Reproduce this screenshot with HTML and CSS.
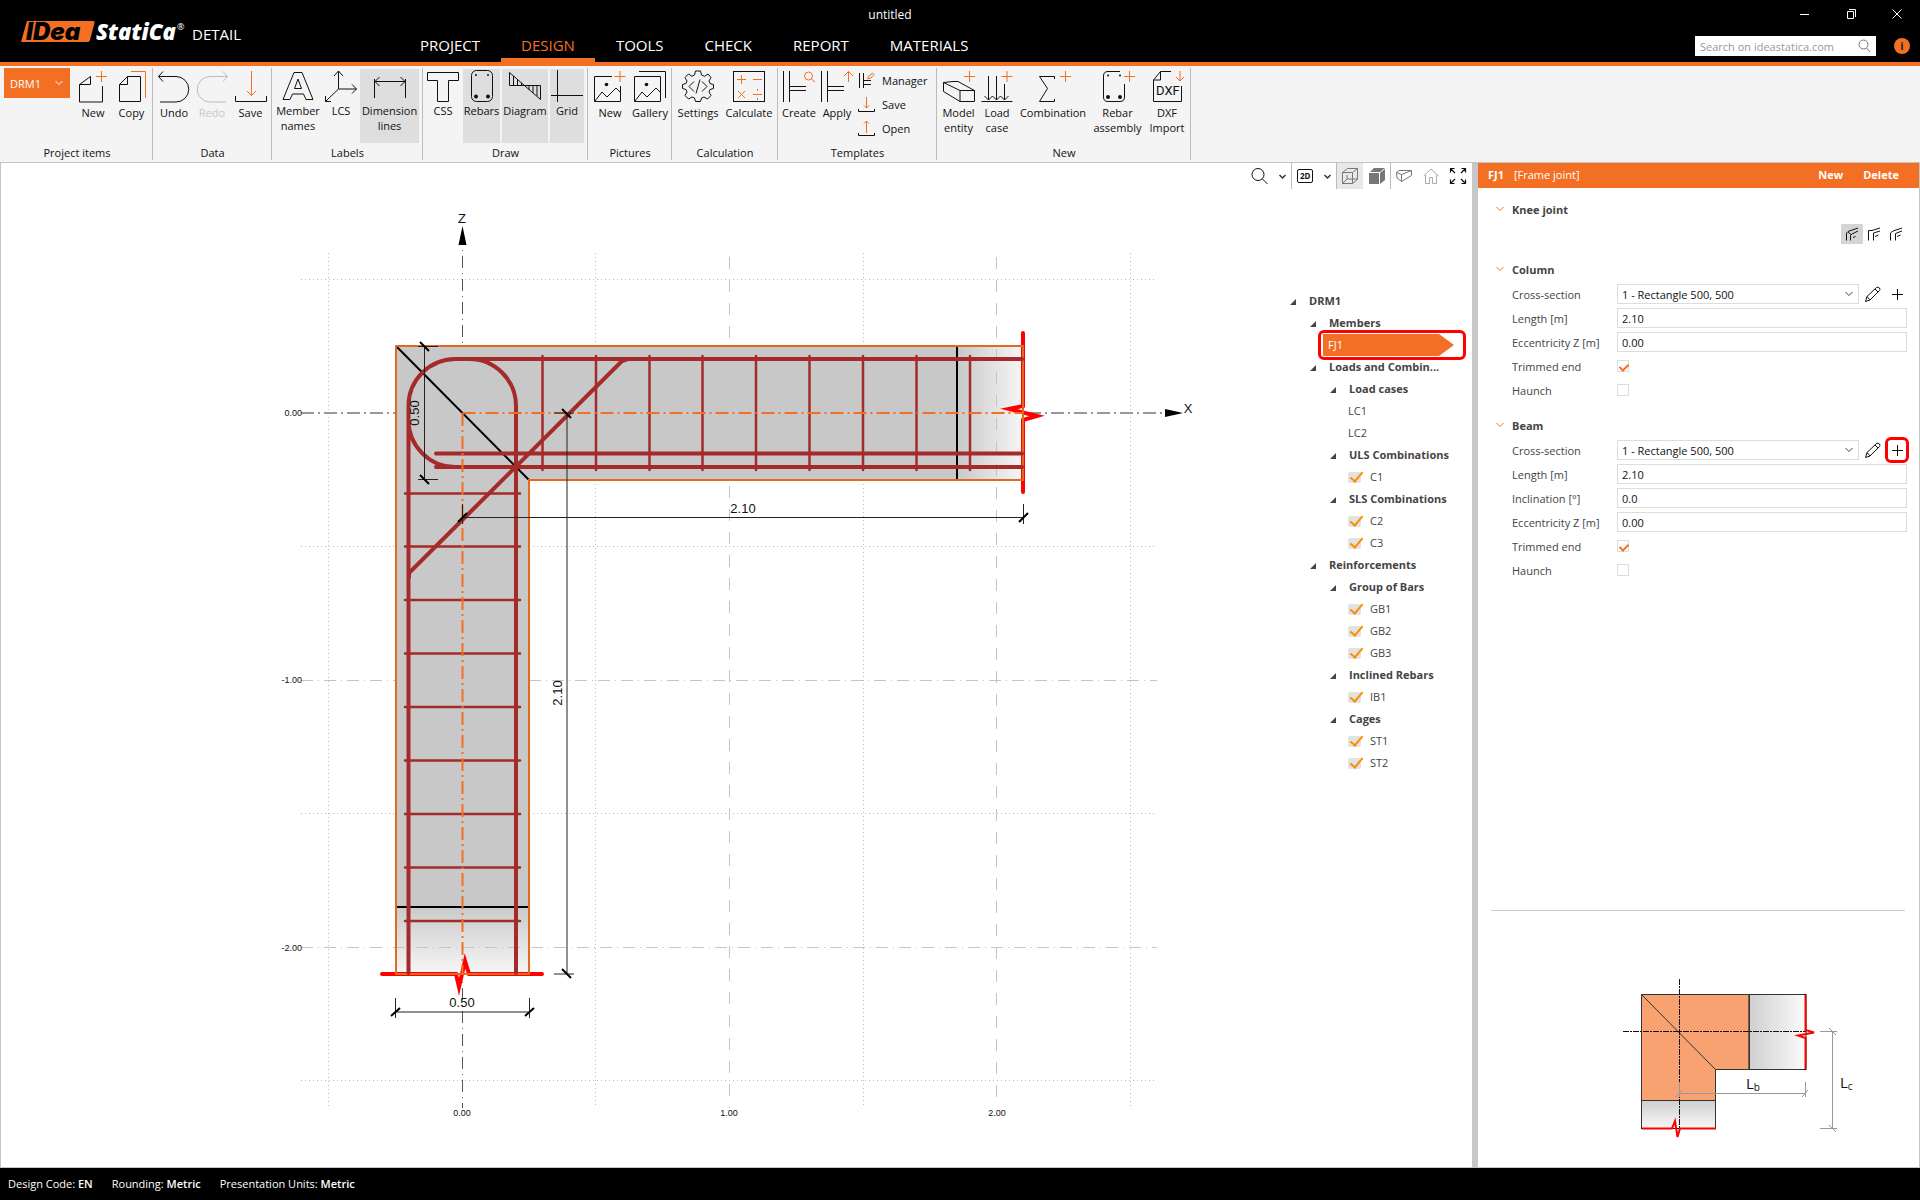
FILE: index.html
```html
<!DOCTYPE html>
<html lang="en">
<head>
    <meta charset="UTF-8">
    <meta name="viewport" content="width=device-width, initial-scale=1.0">
    <title>untitled - IDEA StatiCa Detail</title>
    <link rel="stylesheet" href="styles.css">
</head>
<body>
    <!-- Title bar and main tabs -->
    <header class="header">
        <div class="brand">
            <svg class="logo" width="166" height="26" viewBox="0 0 166 26">
                <path class="logo-box" d="M7 1H73.500Q75 1 74.500 3L70 20Q69.500 22 68 22H1Z"/>
                <text class="logo-idea" x="6" y="20">IDea</text>
                <text class="logo-statica" x="76" y="20">StatiCa</text>
                <text class="logo-reg" x="157" y="10">®</text>
            </svg>
            <span class="product">DETAIL</span>
        </div>
        <nav class="tabs">
            <a href="#">PROJECT</a>
            <a href="#" class="active">DESIGN</a>
            <a href="#">TOOLS</a>
            <a href="#">CHECK</a>
            <a href="#">REPORT</a>
            <a href="#">MATERIALS</a>
        </nav>
        <div class="doc-title">untitled</div>
        <div class="header-right">
            <div class="window-buttons">
                <button type="button" aria-label="Minimize"><svg width="12" height="12" viewBox="0 0 12 12"><path d="M1 6.500H10"/></svg></button>
                <button type="button" aria-label="Restore"><svg width="12" height="12" viewBox="0 0 12 12"><path d="M2.500 3.500H8.500V10.500H2.500ZM4 1.500H10.500V9"/></svg></button>
                <button type="button" aria-label="Close"><svg width="12" height="12" viewBox="0 0 12 12"><path d="M1.500 1.500L10.500 10.500M10.500 1.500L1.500 10.500"/></svg></button>
            </div>
            <div class="search-row">
                <div class="search">
                    <input type="text" placeholder="Search on ideastatica.com" aria-label="Search on ideastatica.com">
                    <svg width="14" height="14" viewBox="0 0 14 14"><circle cx="6.500" cy="5.500" r="4.500"/><path d="M9.500 9L13 13"/></svg>
                </div>
                <button type="button" class="info" aria-label="Information">i</button>
            </div>
        </div>
    </header>

    <!-- Ribbon -->
    <div class="ribbon">
        <section class="group g-project">
            <div class="tools">
                <button type="button" class="project-item">DRM1 <svg width="10" height="10" viewBox="0 0 10 10"><path d="M1.500 3L5 6.500L8.500 3"/></svg></button>
                <button type="button" class="tool"><svg class="icon" viewBox="0 0 32 32"><path d="M13 6.500H13.500V14.500H2.500V32H25.500V16M13.500 6.500L2.500 14.500"/><path class="o" d="M24.500 1V12M19 6.500H30"/></svg>New</button>
                <button type="button" class="tool"><svg class="icon" viewBox="0 0 32 32"><path d="M11.500 6.500H24.500V31.500H3.500V14.500L11.500 6.500V14.500H3.500"/><path class="o" d="M15 1.500H29.500V28"/></svg>Copy</button>
            </div>
            <h2>Project items</h2>
        </section>

        <section class="group g-data">
            <div class="tools">
                <button type="button" class="tool"><svg class="icon" viewBox="0 0 32 32"><path d="M5 1.500L0.500 6.500L5 11.500M0.500 6.500H18A12.500 12.500 0 0 1 18 32H2"/></svg>Undo</button>
                <button type="button" class="tool off" disabled><svg class="icon" viewBox="0 0 32 32"><path d="M27 1.500L31.500 6.500L27 11.500M31.500 6.500H14A12.500 12.500 0 0 0 14 32H30"/></svg>Redo</button>
                <button type="button" class="tool"><svg class="icon" viewBox="0 0 32 32"><path d="M0.500 26V31.500H31.500V26"/><path class="o" d="M16.500 1V25.500M12 21L16.500 25.500L21 21"/></svg>Save</button>
            </div>
            <h2>Data</h2>
        </section>

        <section class="group g-labels">
            <div class="tools">
                <button type="button" class="tool toggle"><svg class="icon" viewBox="0 0 32 32"><path d="M1 29.500L12 2.500H20L31 29.500H24L21.500 24H10.500L8 29.500ZM12.500 18.500H19.500L16 9Z"/></svg>Member names</button>
                <button type="button" class="tool toggle"><svg class="icon" viewBox="0 0 32 32"><path d="M13.500 19V1M9 6L13.500 1L18 6M13.500 19H31.500M27 14.500L31.500 19L27 23.500M13.500 19L0.500 31.500M0.500 26V31.500H6"/></svg>LCS</button>
                <button type="button" class="tool toggle on"><svg class="icon" viewBox="0 0 32 32"><path d="M0.500 9V28M31.500 9V28M1 11.500H31M5.500 7L1 11.500L5.500 16M26.500 7L31 11.500L26.500 16"/></svg>Dimension lines</button>
            </div>
            <h2>Labels</h2>
        </section>

        <section class="group g-draw">
            <div class="tools">
                <button type="button" class="tool toggle"><svg class="icon" viewBox="0 0 32 32"><path d="M0.500 2.500H31.500V10.500H21.500V31.500H10.500V10.500H0.500Z"/></svg>CSS</button>
                <button type="button" class="tool toggle on"><svg class="icon" viewBox="0 0 32 32"><rect x="5.500" y="0.500" width="21" height="31" rx="5"/><circle class="k" cx="10" cy="26.500" r="2"/><circle class="k" cx="22" cy="26.500" r="2"/><circle class="k" cx="10" cy="5" r="1"/><circle class="k" cx="22" cy="5" r="1"/></svg>Rebars</button>
                <button type="button" class="tool toggle on"><svg class="icon" viewBox="0 0 32 32"><path d="M0.500 2.500V15.500H31.500V29.500ZM4.500 6V15M8.500 9.500V15M12.500 13V15M20 16V20M24 16V23M28 16V26"/></svg>Diagram</button>
                <button type="button" class="tool toggle on"><svg class="icon" viewBox="0 0 32 32"><path d="M6.500 0V32M0 25.500H32"/></svg>Grid</button>
            </div>
            <h2>Draw</h2>
        </section>

        <section class="group g-pictures">
            <div class="tools">
                <button type="button" class="tool"><svg class="icon" viewBox="0 0 32 32"><path d="M18 6.500H0.500V31.500H26.500V16M1 31L8 22L13 27L22 18L26 22"/><circle class="k" cx="12.500" cy="14.500" r="1.800"/><path class="o" d="M26 1V12M20.500 6.500H31.500"/></svg>New</button>
                <button type="button" class="tool"><svg class="icon" viewBox="0 0 32 32"><path d="M0.500 6.500H26.500V31.500H0.500ZM1 31L8 22L13 27L22 18L26 22M5 1.500H31.500V28"/><circle class="k" cx="12.500" cy="14.500" r="1.800"/></svg>Gallery</button>
            </div>
            <h2>Pictures</h2>
        </section>

        <section class="group g-calc">
            <div class="tools">
                <button type="button" class="tool"><svg class="icon" viewBox="0 0 32 32"><path d="M13.500 1H18.500L19.500 5L22.500 6.300L26 4L29 7.500L27 11L28 13.500L31.500 14.500V18.500L28 19.500L27 22L29 25.500L25.500 29L22 27L19.500 28L18.500 31.500H13.500L12.500 28L10 27L6.500 29L3 25.500L5 22L4 19.500L0.500 18.500V14.500L4 13.500L5 11L3 7.500L6.500 4L10 6.300L12.500 5ZM12 11.500L7 16.500L12 21.500M20 11.500L25 16.500L20 21.500M18 9.500L14 23.500"/></svg>Settings</button>
                <button type="button" class="tool"><svg class="icon" viewBox="0 0 32 32"><rect x="0.500" y="1.500" width="31" height="30"/><path class="o" d="M8.500 5V14M4 9.500H13M20 9.500H29M5 21L12 28M12 21L5 28M20 24.500H29M24.500 19V21M24.500 28V30"/></svg>Calculate</button>
            </div>
            <h2>Calculation</h2>
        </section>

        <section class="group g-templates">
            <div class="tools">
                <button type="button" class="tool"><svg class="icon" viewBox="0 0 32 32"><path d="M0.500 1V32M6.500 1V32M7 16.500H23M7 20.500H23"/><circle class="o" cx="25.500" cy="6" r="4"/><path class="o" d="M28.500 9L32 12"/></svg>Create</button>
                <button type="button" class="tool"><svg class="icon" viewBox="0 0 32 32"><path d="M0.500 1V32M6.500 1V32M7 16.500H23M7 20.500H23"/><path class="o" d="M27.500 12V1.500M23 6L27.500 1.500L32 6"/></svg>Apply</button>
                <div class="small-tools">
                    <button type="button"><svg width="17" height="17" viewBox="0 0 17 17"><path d="M1.500 1V16M5.500 1V16M6 8.500H13M6 12.500H13"/><path class="o" d="M9.500 7L11 4L14.500 1L16 2.500L13 6Z"/></svg>Manager</button>
                    <button type="button"><svg width="17" height="17" viewBox="0 0 17 17"><path d="M0.500 13V15.500H16.500V13"/><path class="o" d="M8.500 1V12M6 9.500L8.500 12L11 9.500"/></svg>Save</button>
                    <button type="button"><svg width="17" height="17" viewBox="0 0 17 17"><path d="M0.500 13V15.500H16.500V13"/><path class="o" d="M8.500 13V1M6 3.500L8.500 1L11 3.500"/></svg>Open</button>
                </div>
            </div>
            <h2>Templates</h2>
        </section>

        <section class="group g-new">
            <div class="tools">
                <button type="button" class="tool"><svg class="icon" viewBox="0 0 32 32"><path d="M0.500 12.500L17 20.500H31.500V31.500H17L0.500 21.500V12.500L10 11.500H15L31.500 20.500M17 20.500V31.500"/><path class="o" d="M26.500 1V12M21 6.500H32"/></svg>Model entity</button>
                <button type="button" class="tool"><svg class="icon" viewBox="0 0 32 32"><path d="M0.500 31.500H31.500M7.500 6V30M15.500 6V30M23.500 14V30M3.500 26L7.500 30L11.500 26L15.500 30L19.500 26L23.500 30L27.500 26"/><path class="o" d="M26 1V12M20.500 6.500H31.500"/></svg>Load case</button>
                <button type="button" class="tool"><svg class="icon" viewBox="0 0 32 32"><path d="M17.500 9V6.500H2.500L10.500 18.500L2.500 31.500H17.500V29"/><path class="o" d="M28.500 1V12M23 6.500H34"/></svg>Combination</button>
                <button type="button" class="tool"><svg class="icon" viewBox="0 0 32 32"><path d="M18 1.500H6Q1.500 1.500 1.500 6V27Q1.500 31.500 6 31.500H18Q22.500 31.500 22.500 27V14"/><circle class="k" cx="6" cy="27" r="2"/><circle class="k" cx="18" cy="27" r="2"/><circle class="k" cx="6" cy="5.500" r="1"/><circle class="k" cx="18" cy="5.500" r="1"/><path class="o" d="M27.500 1V12M22 6.500H33"/></svg>Rebar assembly</button>
                <button type="button" class="tool"><svg class="icon" viewBox="0 0 32 32"><path d="M20 1.500H9.500L2.500 10V31.500H30.500V16M9.500 1.500V10H2.500"/><text x="5" y="25">DXF</text><path class="o" d="M29 1V11M25 7L29 11L33 7"/></svg>DXF Import</button>
            </div>
            <h2>New</h2>
        </section>
    </div>

    <main class="main">
        <!-- 2D scene -->
        <section class="viewport">
            <div class="view-tools">
                <button type="button" aria-label="Zoom"><svg width="18" height="18" viewBox="0 0 18 18"><circle cx="7" cy="7.500" r="6"/><path d="M11.500 12L16.500 17"/></svg></button>
                <button type="button" class="narrow" aria-label="Zoom options"><svg width="9" height="9" viewBox="0 0 9 9"><path class="thick" d="M1.500 3L4.500 6L7.500 3"/></svg></button>
                <button type="button" class="sep" aria-label="2D view"><svg width="18" height="18" viewBox="0 0 18 18"><rect x="1.500" y="2.500" width="15" height="13" rx="1.500"/><text x="4" y="12">2D</text></svg></button>
                <button type="button" class="narrow" aria-label="2D options"><svg width="9" height="9" viewBox="0 0 9 9"><path class="thick" d="M1.500 3L4.500 6L7.500 3"/></svg></button>
                <button type="button" class="sep on" aria-label="Wireframe"><svg class="gray" width="18" height="18" viewBox="0 0 18 18"><path d="M1.500 5.500H11.500V16.500H1.500ZM1.500 5.500L6.500 1.500H16.500V12.500L11.500 16.500M11.500 5.500L16.500 1.500M1.500 16.500L6 12H16.500M6 12V8"/></svg></button>
                <button type="button" aria-label="Solid"><svg class="solid" width="18" height="18" viewBox="0 0 18 18"><path d="M1 6H11V17H1ZM2 5L6 1H17L12 5ZM12 6L17 2V13L12 17Z"/></svg></button>
                <button type="button" class="sep" aria-label="Section view"><svg class="gray" width="18" height="18" viewBox="0 0 18 18"><path d="M1.500 5.500L4 3.500L16.500 3.500V8.500L6.500 14.500L2 11ZM1.500 5.500L6.500 7.500L16.500 3.500M6.500 7.500V14.500"/></svg></button>
                <button type="button" aria-label="Home"><svg class="light" width="18" height="18" viewBox="0 0 18 18"><path d="M1.500 9L9 2L16.500 9M3.500 8V16.500H7.500V10.500H10.500V16.500H14.500V8"/></svg></button>
                <button type="button" aria-label="Full screen"><svg class="bold" width="18" height="18" viewBox="0 0 18 18"><path d="M1.500 5.500V1.500H5.500M1.500 1.500L6 6M12.500 1.500H16.500V5.500M16.500 1.500L12 6M1.500 12.500V16.500H5.500M1.500 16.500L6 12M12.500 16.500H16.500V12.500M16.500 16.500L12 12"/></svg></button>
            </div>

            <div class="scene">
                <svg class="drawing" viewBox="1 189 1281 960" preserveAspectRatio="xMinYMin meet">
                    <defs>
                        <linearGradient id="fadeRight"><stop offset="0" stop-color="#c8c8c8"/><stop offset="1" stop-color="#f6f6f6"/></linearGradient>
                        <linearGradient id="fadeDown" x1="0" y1="0" x2="0" y2="1"><stop offset="0" stop-color="#cacaca"/><stop offset="1" stop-color="#f6f6f6"/></linearGradient>
                    </defs>

                    <!-- concrete -->
                    <path class="concrete" d="M396 346H957V480H529V907H396Z"/>
                    <rect x="957" y="346" width="66" height="134" fill="url(#fadeRight)"/>
                    <rect x="396" y="907" width="133" height="67" fill="url(#fadeDown)"/>

                    <!-- grid -->
                    <path class="minor" d="M328.500 253V1108M595.500 253V346M595.500 480V1108M863.500 253V346M863.500 480V1108M1130.500 253V1108M301 279.500H1157M301 546.500H396M529 546.500H1157M301 813.500H396M529 813.500H1157M301 1080.500H1157"/>
                    <path class="major" d="M729.500 257V346M729.500 486V1108M996.500 257V1108"/>
                    <path class="major dashdot" d="M301 680.500H396M529 680.500H1157M301 947.500H1157"/>

                    <!-- axes -->
                    <path class="axis-x" d="M301 413H396M1028 413H1166"/>
                    <path class="axis-z" d="M462.500 250V346M462.500 982V1108"/>
                    <path class="fill" d="M462.500 226L466.500 245H458.500ZM1183 413L1165 417V409Z"/>
                    <text class="dim" x="462" y="223">Z</text>
                    <text class="dim" x="1188" y="413">X</text>

                    <!-- member outline -->
                    <path class="cut" d="M957 346V480M396 907H529M396 346L529 480"/>
                    <path class="break" d="M1023 333V406L1009 409L1037 416L1023 420V492M382 974H456L459 987L465 961L469 974H542"/>
                    <path class="outline" d="M396 346H1023V480H529V974H396Z"/>

                    <!-- stirrups -->
                    <path class="stirrup" d="M542.500 356V470M596 356V470M649.500 356V470M702.500 356V470M756 356V470M809.500 356V470M863 356V470M916.500 356V470M970 356V470"/>
                    <path class="stirrup" d="M405 493.500H520M405 546.500H520M405 600H520M405 653.500H520M405 707H520M405 760.500H520M405 814H520M405 867.500H520M405 921H520"/>

                    <!-- main bars -->
                    <path class="bar" d="M408.500 973V406A47 47 0 0 1 455 359H1022M516 973V406A47 47 0 0 0 469 359M408.500 420A47 47 0 0 0 455 467H1022"/>
                    <path class="bar" d="M436 467H455M436 453.500H1022M409 577V573L622 361L628 359"/>

                    <path class="centre" d="M462.500 413H1023M462.500 413V974"/>

                    <!-- dimensions -->
                    <path class="dim-line" d="M424.500 346V480M418 346.500H438M418 479.500H438M567 413V974M554 413H574M554 974H574M462 517.500H1023M462.500 504V524M1023.500 504V524M396 1012H529M395.500 998V1018M529.500 998V1018"/>
                    <path class="tick" d="M420 342L429 351M420 475L429 484M562 409L571 418M562 969L571 978M458 522L467 513M1019 522L1028 513M391 1016L400 1008M525 1016L534 1008"/>
                    <text class="dim" transform="translate(419 413) rotate(-90)">0.50</text>
                    <text class="dim" transform="translate(562 693) rotate(-90)">2.10</text>
                    <text class="dim" x="743" y="513">2.10</text>
                    <text class="dim" x="462" y="1007">0.50</text>
                    <text class="scale-y" x="302" y="416">0.00</text>
                    <text class="scale-y" x="302" y="683">-1.00</text>
                    <text class="scale-y" x="302" y="951">-2.00</text>
                    <text class="scale-x" x="462" y="1116">0.00</text>
                    <text class="scale-x" x="729" y="1116">1.00</text>
                    <text class="scale-x" x="997" y="1116">2.00</text>
                </svg>

                <ul class="tree">
                    <li class="node l1">DRM1</li>
                    <li class="node l2">Members</li>
                    <li class="selected"><a href="#">FJ1</a></li>
                    <li class="node l2">Loads and Combin...</li>
                    <li class="node l3">Load cases</li>
                    <li class="leaf">LC1</li>
                    <li class="leaf">LC2</li>
                    <li class="node l3">ULS Combinations</li>
                    <li class="leaf"><label><input type="checkbox" checked>C1</label></li>
                    <li class="node l3">SLS Combinations</li>
                    <li class="leaf"><label><input type="checkbox" checked>C2</label></li>
                    <li class="leaf"><label><input type="checkbox" checked>C3</label></li>
                    <li class="node l2">Reinforcements</li>
                    <li class="node l3">Group of Bars</li>
                    <li class="leaf"><label><input type="checkbox" checked>GB1</label></li>
                    <li class="leaf"><label><input type="checkbox" checked>GB2</label></li>
                    <li class="leaf"><label><input type="checkbox" checked>GB3</label></li>
                    <li class="node l3">Inclined Rebars</li>
                    <li class="leaf"><label><input type="checkbox" checked>IB1</label></li>
                    <li class="node l3">Cages</li>
                    <li class="leaf"><label><input type="checkbox" checked>ST1</label></li>
                    <li class="leaf"><label><input type="checkbox" checked>ST2</label></li>
                </ul>
            </div>
        </section>

        <!-- Properties -->
        <aside class="panel">
            <div class="panel-head">
                <b>FJ1</b>
                <span>[Frame joint]</span>
                <button type="button">New</button>
                <button type="button">Delete</button>
            </div>
            <div class="panel-body">
                <h3><svg width="10" height="10" viewBox="0 0 10 10"><path d="M1.500 3L5 6.500L8.500 3"/></svg>Knee joint</h3>
                <div class="joint-types">
                    <button type="button" class="on" aria-label="Type 1"><svg width="14" height="14" viewBox="0 0 14 14"><path d="M1.500 13.500V6L3 4.500L13 1M5.500 13.500V8.500L7 7L13 4M3 5L6 7.500M8 10.500L10.500 9.500"/></svg></button>
                    <button type="button" aria-label="Type 2"><svg width="14" height="14" viewBox="0 0 14 14"><path d="M1.500 13.500V3.500H5L13 1M6.500 13.500V6L13 4M8 9.500L11.500 8"/></svg></button>
                    <button type="button" aria-label="Type 3"><svg width="14" height="14" viewBox="0 0 14 14"><path d="M1.500 13.500V6L4 4L13 1M6.500 13.500V6.500L13 4M8 9.500L11.500 8"/></svg></button>
                </div>

                <h3><svg width="10" height="10" viewBox="0 0 10 10"><path d="M1.500 3L5 6.500L8.500 3"/></svg>Column</h3>
                <div class="fields">
                    <label for="col-css">Cross-section</label>
                    <div class="select-row">
                        <div class="select"><select id="col-css"><option>1 - Rectangle 500, 500</option></select><svg width="10" height="10" viewBox="0 0 10 10"><path d="M1.500 3L5 6.500L8.500 3"/></svg></div>
                        <button type="button" aria-label="Edit cross-section"><svg width="16" height="16" viewBox="0 0 16 16"><path d="M0.500 15.500L2 10.500L11.500 1.500Q13 0.500 14.500 2Q15.500 3.500 14.500 4.500L5 14ZM2 10.500L5 14M10 3L13 6"/></svg></button>
                        <button type="button" aria-label="Add cross-section"><svg width="12" height="12" viewBox="0 0 12 12"><path d="M6.500 1V12M1 6.500H12"/></svg></button>
                    </div>
                    <label for="col-len">Length [m]</label>
                    <input type="text" id="col-len" value="2.10">
                    <label for="col-ecc">Eccentricity Z [m]</label>
                    <input type="text" id="col-ecc" value="0.00">
                    <label for="col-trim">Trimmed end</label>
                    <input type="checkbox" id="col-trim" checked>
                    <label for="col-haunch">Haunch</label>
                    <input type="checkbox" id="col-haunch">
                </div>

                <h3><svg width="10" height="10" viewBox="0 0 10 10"><path d="M1.500 3L5 6.500L8.500 3"/></svg>Beam</h3>
                <div class="fields">
                    <label for="beam-css">Cross-section</label>
                    <div class="select-row">
                        <div class="select"><select id="beam-css"><option>1 - Rectangle 500, 500</option></select><svg width="10" height="10" viewBox="0 0 10 10"><path d="M1.500 3L5 6.500L8.500 3"/></svg></div>
                        <button type="button" aria-label="Edit cross-section"><svg width="16" height="16" viewBox="0 0 16 16"><path d="M0.500 15.500L2 10.500L11.500 1.500Q13 0.500 14.500 2Q15.500 3.500 14.500 4.500L5 14ZM2 10.500L5 14M10 3L13 6"/></svg></button>
                        <button type="button" class="marked" aria-label="Add cross-section"><svg width="12" height="12" viewBox="0 0 12 12"><path d="M6.500 1V12M1 6.500H12"/></svg></button>
                    </div>
                    <label for="beam-len">Length [m]</label>
                    <input type="text" id="beam-len" value="2.10">
                    <label for="beam-inc">Inclination [°]</label>
                    <input type="text" id="beam-inc" value="0.0">
                    <label for="beam-ecc">Eccentricity Z [m]</label>
                    <input type="text" id="beam-ecc" value="0.00">
                    <label for="beam-trim">Trimmed end</label>
                    <input type="checkbox" id="beam-trim" checked>
                    <label for="beam-haunch">Haunch</label>
                    <input type="checkbox" id="beam-haunch">
                </div>
            </div>

            <div class="preview">
                <svg width="285" height="170" viewBox="1620 975 285 170">
                    <defs>
                        <linearGradient id="pvRight"><stop offset="0" stop-color="#cfcfcf"/><stop offset="1" stop-color="#fbfbfb"/></linearGradient>
                        <linearGradient id="pvDown" x1="0" y1="0" x2="0" y2="1"><stop offset="0" stop-color="#cfcfcf"/><stop offset="1" stop-color="#f8f8f8"/></linearGradient>
                    </defs>
                    <path class="pv-body" d="M1641.500 994.500H1749V1069.500H1715.500V1100.500H1641.500Z"/>
                    <rect x="1749" y="994.500" width="57" height="75" fill="url(#pvRight)"/>
                    <rect x="1641.500" y="1100.500" width="74" height="28" fill="url(#pvDown)"/>
                    <path class="pv-line" d="M1641.500 994.500H1805M1749.500 994.500V1069.500M1805 1069.500H1715.500V1128M1641.500 994.500V1128M1641.500 1100.500H1716M1641.500 994.500L1715.500 1069.500"/>
                    <path class="pv-axis" d="M1623 1031.500H1806M1679.500 979V1132"/>
                    <path class="pv-dim" d="M1679.500 1082V1097M1679.500 1093.500H1805.500M1805.500 1082V1097M1676 1097L1682 1090M1802 1097L1808 1090M1820 1031.500H1837M1832.500 1031.500V1128.500M1820 1128.500H1837M1829 1028L1836 1035M1829 1125L1836 1132"/>
                    <path class="pv-break" d="M1805.500 995V1030L1814 1032.500L1798 1035.500L1805.500 1038V1069M1642 1128.500H1672L1675 1121L1677.500 1137L1680 1128.500H1716"/>
                    <text class="pv-text" x="1746" y="1089">L<tspan class="pv-sub" dy="2">b</tspan></text>
                    <text class="pv-text" x="1840" y="1088">L<tspan class="pv-sub" dy="2">c</tspan></text>
                </svg>
            </div>
        </aside>
    </main>

    <footer class="status">
        <span>Design Code: <b>EN</b></span>
        <span>Rounding: <b>Metric</b></span>
        <span>Presentation Units: <b>Metric</b></span>
    </footer>
</body>
</html>
```

FILE: styles.css
```css
* {
    box-sizing: border-box;
}

body {
    margin: 0;
    min-height: 100vh;
    display: flex;
    flex-direction: column;
    font-family: "Open Sans", "Noto Sans", sans-serif;
    font-size: 11px;
    line-height: 15px;
    color: #444;
    background: #fff;
}

button, input, select {
    font: inherit;
    color: inherit;
}

button {
    padding: 0;
    border: none;
    background: none;
    cursor: pointer;
}

svg {
    display: block;
    fill: none;
    stroke: #111;
    overflow: visible;
}

svg text {
    stroke: none;
    fill: #111;
}

h2, h3 {
    margin: 0;
    font-size: 11px;
}

/* Header */
.header {
    position: relative;
    display: flex;
    height: 66px;
    border-bottom: 4px solid #f36f24;
    background: #000;
    color: #fff;
}

.brand {
    display: flex;
    align-items: flex-start;
    width: 400px;
    padding: 20px 0 0 20px;
}

.logo-box {
    fill: #f36f24;
    stroke: none;
}

.logo .logo-idea {
    font: italic 900 24px Inter, sans-serif;
    fill: #000;
}

.logo .logo-statica {
    font: italic 800 22px "Open Sans", sans-serif;
    fill: #fff;
}

.logo .logo-reg {
    font-size: 9px;
    fill: #fff;
}

.product {
    padding: 4px 0 0 6px;
    font-size: 15px;
    line-height: 20px;
}

.tabs {
    display: flex;
    align-items: flex-end;
    gap: 1px;
}

.tabs a {
    padding: 0 20px 3px;
    border-bottom: 4px solid transparent;
    font-size: 15px;
    line-height: 20px;
    color: #fff;
    text-decoration: none;
}

.tabs .active {
    color: #f36f24;
    border-color: #f36f24;
}

.doc-title {
    position: absolute;
    top: 7px;
    left: 0;
    right: 140px;
    font-size: 12px;
    text-align: center;
    pointer-events: none;
}

.header-right {
    display: flex;
    flex-direction: column;
    align-items: flex-end;
    margin-left: auto;
    padding: 8px 10px 0 0;
}

.window-buttons {
    display: flex;
    gap: 34px;
    padding-right: 7px;
}

.window-buttons svg {
    stroke: #fff;
}

.search-row {
    display: flex;
    align-items: center;
    gap: 18px;
    margin-top: 16px;
}

.search {
    display: flex;
    align-items: center;
    width: 181px;
    height: 20px;
    padding: 0 5px;
    background: #fff;
}

.search input {
    flex: 1;
    min-width: 0;
    padding: 0;
    border: none;
    outline: none;
}

.search input::placeholder {
    color: #999;
}

.search svg {
    stroke: #777;
}

.info {
    width: 16px;
    height: 16px;
    border-radius: 50%;
    background: #f36f24;
    color: #222;
    font-weight: bold;
    line-height: 16px;
}

/* Ribbon */
.ribbon {
    display: flex;
    height: 97px;
    padding: 2px 0 2px 1px;
    border-bottom: 1px solid #c4c4c4;
    background: #f4f4f4;
    color: #111;
}

.group {
    display: flex;
    flex-direction: column;
    justify-content: space-between;
    padding: 0 1px 0 2px;
    border-right: 1px solid #bbb;
}

.group h2 {
    font-weight: normal;
    text-align: center;
}

.tools {
    display: grid;
    justify-content: start;
}

.g-project .tools { grid-template-columns: 70px 38px 39px; padding-left: 1px; }
.g-data .tools { grid-template-columns: 38px 38px 39px; }
.g-labels .tools { grid-template-columns: 50px 36px 61px; }
.g-draw .tools { grid-template-columns: 38px 39px 48px 36px; }
.g-pictures .tools { grid-template-columns: 40px 40px; }
.g-calc .tools { grid-template-columns: 48px 54px; }
.g-templates .tools { grid-template-columns: 38px 38px 79px; }
.g-new .tools { grid-template-columns: 39px 38px 74px 55px 44px; }

.project-item {
    display: flex;
    align-items: center;
    justify-content: space-between;
    width: 66px;
    height: 30px;
    padding: 0 6px;
    background: #f36f24;
    color: #fff;
}

.project-item svg {
    stroke: #fff;
}

.tool {
    display: flex;
    flex-direction: column;
    align-items: center;
    height: 74px;
    padding-top: 2px;
}

.tool .icon {
    flex: none;
    width: 32px;
    height: 32px;
    margin-bottom: 3px;
}

.tool.toggle {
    margin: 1px 2px 0 0;
    padding-top: 1px;
}

.tool.toggle .icon {
    margin-bottom: 1px;
}

.tool.on {
    background: #dedede;
}

.tool.off {
    color: #c8c8c8;
}

.tool.off svg {
    stroke: #bbb;
}

.ribbon .o {
    stroke: #f36f24;
}

.ribbon .k {
    fill: #111;
    stroke: none;
}

.tool text {
    font: 13px Roboto, sans-serif;
}

.small-tools {
    display: flex;
    flex-direction: column;
    padding-left: 2px;
}

.small-tools button {
    display: flex;
    align-items: center;
    gap: 7px;
    height: 24px;
}

/* Scene */
.main {
    flex: 1;
    display: flex;
}

.viewport {
    flex: 1;
    display: flex;
    flex-direction: column;
    min-width: 0;
    border-left: 1px solid #c4c4c4;
}

.view-tools {
    display: flex;
    justify-content: flex-end;
    height: 26px;
    padding-right: 1px;
}

.view-tools button {
    display: flex;
    align-items: center;
    justify-content: center;
    width: 27px;
}

.view-tools .narrow {
    width: 18px;
}

.view-tools .sep {
    border-left: 1px solid #bbb;
}

.view-tools .on {
    background: #e8e8e8;
}

.view-tools text {
    font: bold 8px "Open Sans", sans-serif;
}

.view-tools .thick {
    stroke: #333;
    stroke-width: 1.5;
}

.view-tools .gray {
    stroke: #777;
}

.view-tools .light {
    stroke: #aaa;
}

.view-tools .solid {
    fill: #777;
    stroke: none;
}

.view-tools .bold {
    stroke-width: 1.2;
}

.scene {
    flex: 1;
    display: flex;
}

.drawing {
    flex: 1;
    min-width: 0;
    align-self: flex-start;
}

.concrete {
    fill: #c8c8c8;
    stroke: none;
}

.minor {
    stroke: #bbb;
    stroke-dasharray: 1 3;
}

.major {
    stroke: #c4c4c4;
    stroke-dasharray: 12 11;
}

.dashdot {
    stroke-dasharray: 12 5 1 5;
}

.axis-x {
    stroke: #999;
    stroke-width: 2;
    stroke-dasharray: 13 4 2 4;
}

.axis-z {
    stroke: #555;
    stroke-dasharray: 1 5 12 5;
}

.drawing .fill {
    fill: #000;
    stroke: none;
}

.cut {
    stroke: #000;
    stroke-width: 2;
}

.break {
    stroke: #f00;
    stroke-width: 4;
    stroke-linecap: round;
    stroke-miterlimit: 10;
}

.outline {
    stroke: #e06a24;
    stroke-width: 2;
}

.stirrup {
    stroke: #a52a2a;
    stroke-width: 2.5;
    stroke-linecap: round;
}

.bar {
    stroke: #a52a2a;
    stroke-width: 4;
    stroke-linecap: round;
    stroke-linejoin: round;
}

.centre {
    stroke: #f36f24;
    stroke-width: 2;
    stroke-dasharray: 13 4 2 4;
}

.dim-line {
    stroke: #222;
}

.tick {
    stroke: #000;
    stroke-width: 2;
}

.dim {
    font: 13px "Liberation Sans", Arial, sans-serif;
    text-anchor: middle;
}

.scale-x, .scale-y {
    font: 9px "Liberation Sans", Arial, sans-serif;
    text-anchor: middle;
}

.scale-y {
    text-anchor: end;
}

/* Tree */
.tree {
    flex: none;
    width: 190px;
    margin: 0;
    padding: 101px 0 0;
    list-style: none;
}

.tree li {
    position: relative;
    height: 22px;
    line-height: 22px;
}

.node {
    font-weight: bold;
}

.node::before {
    content: "";
    display: inline-block;
    margin-right: 13px;
    border-left: 6px solid transparent;
    border-bottom: 6px solid #444;
}

.l1 { padding-left: 8px; }
.l2 { padding-left: 28px; }
.l3 { padding-left: 48px; }
.leaf { padding-left: 66px; }

.leaf label {
    display: flex;
    align-items: center;
    gap: 9px;
}

.leaf input {
    appearance: none;
    width: 13px;
    height: 11px;
    margin: 0;
    border-radius: 2px;
    background: #e2e2e2;
    position: relative;
}

.leaf input:checked::after {
    content: "";
    position: absolute;
    left: 5px;
    top: -3px;
    width: 5px;
    height: 11px;
    border: solid #ff8c00;
    border-width: 0 2px 2px 0;
    transform: rotate(40deg);
}

.selected a {
    display: block;
    width: 131px;
    margin-left: 41px;
    padding-left: 5px;
    background: #f36f24;
    clip-path: polygon(0 0, 116px 0, 100% 50%, 116px 100%, 0 100%);
    color: #fff;
    text-decoration: none;
}

.selected::after {
    content: "";
    position: absolute;
    inset: -4px 6px -4px 36px;
    border: 3px solid #f00;
    border-radius: 6px;
}

/* Panel */
.panel {
    flex: none;
    display: flex;
    flex-direction: column;
    width: 448px;
    border-left: 6px solid #c8c8c8;
    border-right: 1px solid #c4c4c4;
}

.panel-head {
    display: flex;
    align-items: center;
    gap: 10px;
    height: 25px;
    padding: 0 20px 2px 10px;
    background: #f36f24;
    color: #fff;
}

.panel-head button {
    margin-left: auto;
    font-weight: bold;
}

.panel-head button + button {
    margin-left: 10px;
}

.panel-body {
    flex: 1;
    padding: 10px 12px 0 17px;
}

.panel h3 {
    display: flex;
    align-items: center;
    gap: 7px;
    height: 24px;
    padding-bottom: 2px;
}

.panel h3 svg {
    stroke: #f36f24;
}

.joint-types {
    display: flex;
    justify-content: flex-end;
    height: 36px;
    padding: 2px 0 14px;
}

.joint-types button {
    display: flex;
    align-items: center;
    justify-content: center;
    width: 22px;
}

.joint-types .on {
    background: #d4d4d4;
}

.fields {
    display: grid;
    grid-template-columns: 105px 1fr;
    grid-auto-rows: 24px;
    align-items: center;
    margin-bottom: 12px;
    padding-left: 17px;
}

.fields input, .fields select {
    width: 100%;
    height: 20px;
    padding: 0 4px;
    border: 1px solid #ddd;
    border-radius: 0;
    background: #fff;
    color: #111;
    outline: none;
}

.fields input[type="checkbox"] {
    appearance: none;
    width: 12px;
    height: 12px;
    margin: 0;
    padding: 0;
    position: relative;
}

.fields input[type="checkbox"]:checked::after {
    content: "";
    position: absolute;
    left: 3px;
    top: 1px;
    width: 4px;
    height: 7px;
    border: solid #f36f24;
    border-width: 0 2px 2px 0;
    transform: rotate(45deg);
}

.select-row {
    display: flex;
    align-items: center;
    margin-right: -2px;
}

.select {
    position: relative;
    flex: 1;
}

.select select {
    display: block;
    appearance: none;
}

.select svg {
    position: absolute;
    right: 5px;
    top: 5px;
    stroke: #444;
    pointer-events: none;
}

.select-row button {
    position: relative;
    display: flex;
    justify-content: center;
    width: 24px;
}

.select-row button:first-of-type {
    margin-left: 2px;
}

.marked::after {
    content: "";
    position: absolute;
    inset: -7px 0;
    border: 3px solid #f00;
    border-radius: 6px;
}

.preview {
    display: flex;
    justify-content: flex-end;
    height: 257px;
    margin: 0 14px 0 13px;
    padding-top: 64px;
    border-top: 1px solid #ccc;
}

.pv-body {
    fill: #f7a270;
    stroke: none;
}

.pv-line {
    stroke: #333;
}

.pv-axis {
    stroke: #111;
    stroke-dasharray: 6 1 2 1;
}

.pv-dim {
    stroke: #999;
}

.pv-break {
    stroke: #f00;
    stroke-width: 2;
}

.pv-text {
    font: 15px "Open Sans", sans-serif;
}

.pv-sub {
    font-size: 10px;
}

/* Status bar */
.status {
    display: flex;
    align-items: center;
    gap: 19px;
    height: 33px;
    padding: 0 0 2px 8px;
    border-top: 1px solid #c4c4c4;
    background: #000;
    color: #fff;
}

.status b {
    font-weight: 600;
}
```
